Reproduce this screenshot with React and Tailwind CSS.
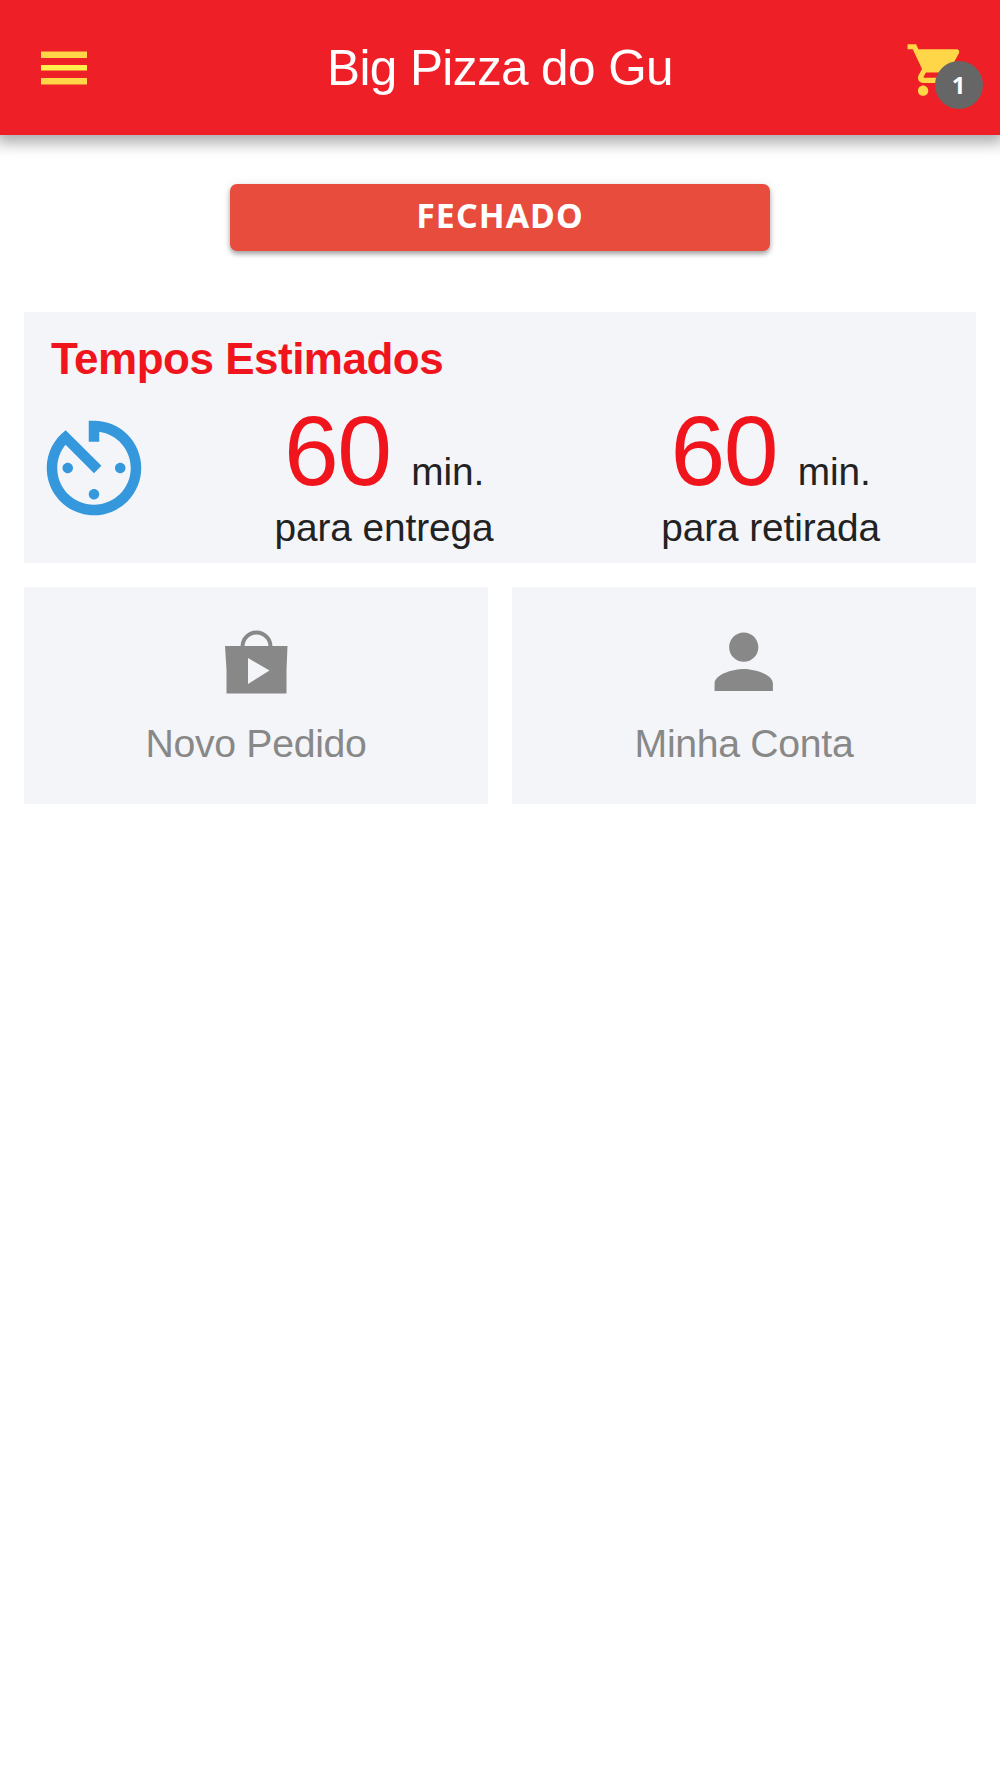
import React from 'react';
import { MdAvTimer, MdPerson, MdShoppingCart } from 'react-icons/md';

const estimates = [
  { id: 'delivery', minutes: 60, label: 'para entrega' },
  { id: 'pickup', minutes: 60, label: 'para retirada' },
];

const MenuIcon = () => (
  <svg className="h-[34px] w-[46px] fill-[#fed647]" viewBox="0 0 46 34">
    <rect x="0" y="0.5" width="46" height="6.5" />
    <rect x="0" y="14" width="46" height="5.5" fill="#fff04c" />
    <rect x="0" y="27" width="46" height="6.5" />
  </svg>
);

const BagIcon = () => (
  <svg className="h-[64px] w-[63px]" viewBox="0 0 63 64">
    <path d="M17.500 18v-1.500a14 14 0 0 1 28 0V18" fill="none" stroke="#888" strokeWidth="4" />
    <path d="M0 16h62.500l-1 24v23.500h-60V40zM23 28v26L44.500 40.500z" fill="#888" fillRule="evenodd" />
  </svg>
);

const Header = ({ title, cartCount }) => (
  <header className="grid h-[135px] grid-cols-[1fr_auto_1fr] items-center bg-[#ef1f27] shadow-[0_4px_14px_4px_rgba(0,0,0,0.33)]">
    <button className="justify-self-start pl-[41px]">
      <MenuIcon />
    </button>
    <h1 className="text-[49.5px] leading-none tracking-[-0.6px] text-white">{title}</h1>
    <button className="relative mr-[33px] justify-self-end pt-[4px]">
      <MdShoppingCart className="size-[62px] text-[#fed647]" />
      <span className="absolute top-[26px] left-[30px] flex size-12 items-center justify-center rounded-full bg-[#666] pr-px font-['Noto_Sans',sans-serif] text-2xl font-bold text-white">
        {cartCount}
      </span>
    </button>
  </header>
);

const Estimate = ({ minutes, label }) => (
  <div className="text-center text-[38.8px] leading-[56px] tracking-[-0.1px] text-[#222]">
    <div className="h-[93px] leading-[88px]">
      <span className="mr-[10px] text-[98.5px] tracking-[-1.5px] text-[#f0141c]">{minutes}</span> min.
    </div>
    <div>{label}</div>
  </div>
);

const Tile = ({ icon, label }) => (
  <button className="flex h-[217px] flex-col items-center bg-[#f4f5f9] text-[39.2px] tracking-[-0.3px] text-[#888]">
    <span className="flex h-[135px] items-center justify-center pt-[15px]">{icon}</span>
    <span className="leading-[44px]">{label}</span>
  </button>
);

const App = () => {
  return (
    <div className="min-h-[1778px] overflow-x-hidden bg-white font-['Liberation_Sans',Arial,sans-serif]">
      <Header title="Big Pizza do Gu" cartCount={1} />

      <main className="px-6 pt-[49px]">
        <button className="mx-auto flex h-[67px] w-[540px] justify-center rounded-[7px] bg-[#e84c3d] pt-[8px] font-['Noto_Sans',sans-serif] text-[33.8px] leading-[46px] font-bold tracking-[1.1px] text-white shadow-[0_3px_5px_rgba(0,0,0,0.35),0_0_12px_rgba(0,0,0,0.06)]">
          FECHADO
        </button>

        {/* Estimated times */}
        <section className="mt-[61px] h-[251px] bg-[#f4f5f9] px-3 pt-[22px]">
          <h2 className="pl-[15px] text-[44px] leading-[50px] font-bold tracking-[-0.5px] text-[#f0141c]">
            Tempos Estimados
          </h2>
          <div className="grid grid-cols-[2fr_5fr_5fr] pt-[23px]">
            <MdAvTimer className="-mt-[2px] -ml-[5px] size-[126px] text-[#3598dc]" />
            {estimates.map((item) => (
              <Estimate key={item.id} minutes={item.minutes} label={item.label} />
            ))}
          </div>
        </section>

        <div className="mt-6 grid grid-cols-2 gap-6">
          <Tile icon={<BagIcon />} label="Novo Pedido" />
          <Tile icon={<MdPerson className="size-[87.5px] text-[#888]" />} label="Minha Conta" />
        </div>
      </main>
    </div>
  );
};

export default App;
